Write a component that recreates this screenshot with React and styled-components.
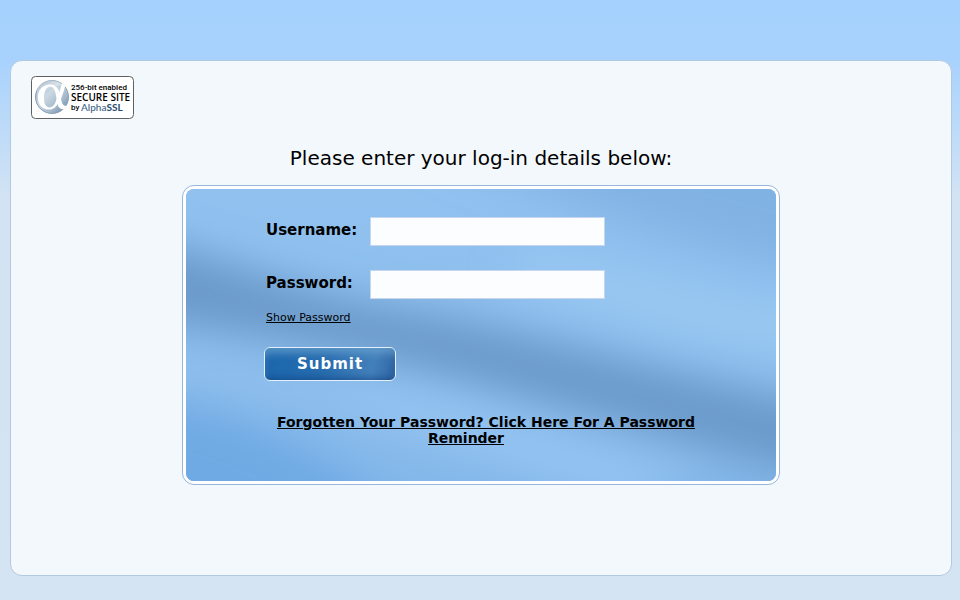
import React, { useState } from "react";
import styled, { createGlobalStyle } from "styled-components";

const GlobalStyle = createGlobalStyle`
  *, *::before, *::after { box-sizing: border-box; }
  html { min-height: 100%; background: #d5e4f2; }
  body {
    margin: 0;
    min-height: 100vh;
    background: linear-gradient(#a4d1fe 0, #a8d2fd 60px, #d3e3f3 200px, #d5e4f2 100%);
    color: #000;
    font-family: "DejaVu Sans", Verdana, sans-serif;
  }
`;

const Page = styled.div`
  display: flex;
  min-height: 100vh;
  padding: 60px 8px 24px 10px;
`;

const Sheet = styled.main`
  flex: 1;
  display: flex;
  flex-direction: column;
  padding: 15px 20px;
  border: 1px solid #b3c9de;
  border-radius: 12px;
  background: #f3f8fc;
`;

const SealLink = styled.a`
  display: block;
  align-self: flex-start;
  line-height: 0;
`;

const Heading = styled.h1`
  margin: 28px 0 16px;
  font-size: 20px;
  line-height: 22px;
  font-weight: 400;
  text-align: center;
`;

const LoginPanel = styled.section`
  width: 100%;
  max-width: 598px;
  align-self: center;
  padding: 3px;
  border: 1px solid #96b6dc;
  border-radius: 12px;
  background: #fff;
`;

const PanelBody = styled.div`
  position: relative;
  overflow: hidden;
  border-radius: 8px;
  background: #88b9e9;
`;

const WaveArt = styled.svg`
  position: absolute;
  inset: 0;
  width: 100%;
  height: 100%;
`;

const LoginForm = styled.form`
  position: relative;
  padding: 28px 70px 35px 40px;
`;

const Controls = styled.div`
  display: flex;
  flex-direction: column;
  align-items: flex-start;
  padding-left: 40px;
`;

const Field = styled.div`
  display: grid;
  grid-template-columns: 104px 235px;
  margin-bottom: ${({ $last }) => ($last ? "12px" : "24px")};
`;

const FieldLabel = styled.label`
  font-size: 15px;
  line-height: 26px;
  font-weight: 700;
`;

const TextInput = styled.input`
  width: 100%;
  height: 29px;
  padding: 4px 6px;
  border: 1px solid #c5d6ee;
  border-radius: 0;
  background: #fcfdfe;
  font: 15px "DejaVu Sans", sans-serif;
`;

const ToggleButton = styled.button`
  padding: 0;
  border: 0;
  background: none;
  color: #000;
  font: 11px/14px "DejaVu Sans", sans-serif;
  text-decoration: underline;
  cursor: pointer;
`;

const SubmitButton = styled.button`
  width: 132px;
  height: 34px;
  margin: 22px 0 33px -2px;
  padding: 0;
  border: 1px solid #e4f0fb;
  border-radius: 6px;
  background: linear-gradient(100deg, #1b66ad 0%, #276cae 45%, #4380bb 82%, #2f66a5 100%);
  box-shadow: inset 0 7px 8px -2px rgba(112, 170, 212, 0.7),
    inset 0 -4px 6px -1px rgba(18, 66, 128, 0.45),
    inset -3px 0 5px -1px rgba(18, 66, 128, 0.45);
  color: #fff;
  font: 700 15px/20px "DejaVu Sans", sans-serif;
  letter-spacing: 1px;
  cursor: pointer;
`;

const Reminder = styled.p`
  margin: 0;
  font-size: 14px;
  line-height: 16px;
  font-weight: 700;
  text-align: center;
  text-indent: 40px;
`;

const ReminderLink = styled.a`
  color: #000;
`;

function SecureSeal() {
  return (
    <svg width="103" height="43" viewBox="0 0 103 43" role="img" aria-label="256-bit enabled secure site by AlphaSSL">
      <defs>
        <linearGradient id="orb" x1="0" y1="0" x2="1" y2="1">
          <stop offset="0" stopColor="#8ca7bd" />
          <stop offset="0.4" stopColor="#cbd9e3" />
          <stop offset="0.7" stopColor="#a5b9ca" />
          <stop offset="1" stopColor="#597c9f" />
        </linearGradient>
        <clipPath id="orb-clip"><circle cx="21" cy="21" r="17" /></clipPath>
      </defs>
      <rect x="0.5" y="0.5" width="102" height="42" rx="4" fill="#fff" stroke="#5e6062" />
      <circle cx="21" cy="21" r="16.5" fill="url(#orb)" stroke="#89a1b6" />
      <g clipPath="url(#orb-clip)">
        <path d="M6 10C12 2 26 2 32 9C24 8 14 14 6 22Z" fill="#fff" opacity="0.25" />
        <path
          fill="#fff"
          fillRule="evenodd"
          d="M19 8.500C23.500 8.500 26.500 11 28.500 16L31 7H35C33 15 31.500 19 30 23C31 28.500 33 31 38 29.500V31.500C31.500 35 27.500 33 26.500 28C24.500 32 21.500 33.500 17.500 33.500C11 33.500 7 28 7 21.500C7 13.500 12 8.500 19 8.500ZM19.500 10.500C15 10.500 13 16 13 22.500C13 28 15 31.500 18.500 31.500C22 31.500 24.500 28 25.500 22.500C24.500 15.500 23 10.500 19.500 10.500Z"
        />
      </g>
      <g fontFamily="'Open Sans', sans-serif">
        <text x="40" y="14" fontFamily="Roboto, sans-serif" fontSize="8" fontWeight="500">256-bit enabled</text>
        <text x="40" y="25" fontSize="10" fontWeight="600">SECURE SITE</text>
        <text x="40" y="34" fontFamily="Roboto, sans-serif" fontSize="8" fontWeight="500">by</text>
        <text x="50" y="35" fontSize="10" fontWeight="500" fill="#3d6286" fontFamily="Lato, sans-serif">
          Alpha<tspan fontWeight="700" fill="#24486f">SSL</tspan>
        </text>
      </g>
    </svg>
  );
}

function PanelWaves() {
  return (
    <WaveArt viewBox="0 0 590 292" preserveAspectRatio="none" aria-hidden="true">
      <defs>
        <linearGradient id="base" x1="0" y1="0" x2="0" y2="1">
          <stop offset="0" stopColor="#90c1ef" />
          <stop offset="0.7" stopColor="#8cbdec" />
          <stop offset="1" stopColor="#84b8ea" />
        </linearGradient>
        <filter id="soft" x="-20%" y="-50%" width="140%" height="200%">
          <feGaussianBlur stdDeviation="20" />
        </filter>
      </defs>
      <rect width="590" height="292" fill="url(#base)" />
      <g filter="url(#soft)">
        <path d="M-60 45C20 62 110 102 200 118C310 132 450 180 680 225V300C560 275 460 240 350 212C220 174 80 145 -60 130Z" fill="#6a9aca" />
        <path d="M230 -50H700V90C560 75 440 40 230 -50Z" fill="#81b2e4" />
        <path d="M330 62C450 75 530 110 680 125V170C520 165 440 126 330 96Z" fill="#9ac8f2" />
        <path d="M-60 205C40 215 140 250 240 350H-60Z" fill="#6faae4" />
        <path d="M150 195C280 205 350 248 520 288L430 310C300 265 220 240 150 205Z" fill="#95c5f2" />
      </g>
    </WaveArt>
  );
}

export default function App() {
  const [visible, setVisible] = useState(false);

  return (
    <>
      <GlobalStyle />
      <Page>
        <Sheet>
          <SealLink href="#seal"><SecureSeal /></SealLink>
          <Heading>Please enter your log-in details below:</Heading>
          <LoginPanel>
            <PanelBody>
              <PanelWaves />
              <LoginForm onSubmit={(event) => event.preventDefault()}>
                <Controls>
                  <Field>
                    <FieldLabel htmlFor="username">Username:</FieldLabel>
                    <TextInput id="username" name="username" type="text" />
                  </Field>
                  <Field $last>
                    <FieldLabel htmlFor="password">Password:</FieldLabel>
                    <TextInput id="password" name="password" type={visible ? "text" : "password"} />
                  </Field>
                  <ToggleButton type="button" onClick={() => setVisible(!visible)}>
                    {visible ? "Hide Password" : "Show Password"}
                  </ToggleButton>
                  <SubmitButton type="submit">Submit</SubmitButton>
                </Controls>
                <Reminder>
                  <ReminderLink href="#reminder">
                    Forgotten Your Password? Click Here For A Password Reminder
                  </ReminderLink>
                </Reminder>
              </LoginForm>
            </PanelBody>
          </LoginPanel>
        </Sheet>
      </Page>
    </>
  );
}
